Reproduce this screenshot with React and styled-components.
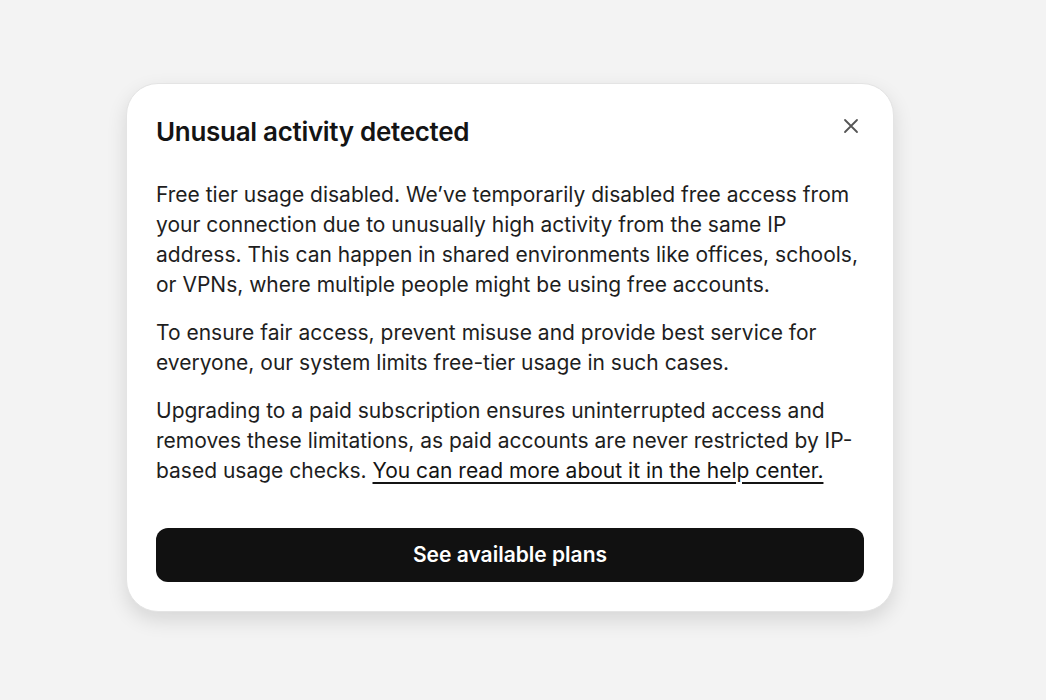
import React from 'react';
import styled, { createGlobalStyle } from 'styled-components';

const GlobalStyle = createGlobalStyle`
  html, body {
    margin: 0;
    padding: 0;
    background: #f3f3f3;
    font-family: Inter, "Noto Sans", sans-serif;
  }
`;

const Page = styled.div`
  display: flex;
  align-items: center;
  justify-content: center;
  height: 700px;
  padding: 0 26px 6px 0;
  box-sizing: border-box;
`;

const Modal = styled.div`
  position: relative;
  width: 768px;
  box-sizing: border-box;
  padding: 32px 29px 29px;
  background: #fff;
  border: 1px solid #e4e4e4;
  border-radius: 32px;
  box-shadow: 0 8px 20px rgba(0, 0, 0, 0.12);
  color: #1b1b1b;
`;

const Title = styled.h2`
  margin: 0 0 32px;
  font-size: 26px;
  line-height: 32px;
  font-weight: 600;
  letter-spacing: -0.3px;
  color: #141414;
`;

const CloseButton = styled.button`
  position: absolute;
  top: 30px;
  right: 30px;
  width: 24px;
  height: 24px;
  padding: 0;
  border: none;
  background: none;
  display: flex;
  align-items: center;
  justify-content: center;
  color: #555;
  cursor: pointer;
`;

const Body = styled.div`
  display: flex;
  flex-direction: column;
  gap: 18px;
`;

const Paragraph = styled.p`
  margin: 0;
  font-size: 21px;
  line-height: 30px;
  color: #1e1e1e;
`;

const HelpLink = styled.a`
  color: #141414;
  text-decoration: underline;
  text-underline-offset: 4px;
  text-decoration-thickness: 1.5px;
`;

const PlansButton = styled.button`
  display: block;
  width: 100%;
  height: 54px;
  margin-top: 42px;
  border: none;
  border-radius: 12px;
  background: #111;
  color: #fff;
  font-family: inherit;
  font-size: 21px;
  font-weight: 600;
  cursor: pointer;
`;

export default function App() {
  return (
    <>
      <GlobalStyle />
      <Page>
        <Modal>
          <CloseButton aria-label="Close">
            <svg width="16" height="16" viewBox="0 0 16 16" fill="none" stroke="currentColor" strokeWidth="1.8" strokeLinecap="round">
              <path d="M2 2l12 12M14 2L2 14" />
            </svg>
          </CloseButton>
          <Title>Unusual activity detected</Title>
          <Body>
            <Paragraph>
              Free tier usage disabled. We’ve temporarily disabled free access from your connection due to unusually high activity from the same IP address. This can happen in shared environments like offices, schools, or VPNs, where multiple people might be using free accounts.
            </Paragraph>
            <Paragraph>
              To ensure fair access, prevent misuse and provide best service for everyone, our system limits free-tier usage in such cases.
            </Paragraph>
            <Paragraph>
              Upgrading to a paid subscription ensures uninterrupted access and removes these limitations, as paid accounts are never restricted by IP-based usage checks.{' '}
              <HelpLink href="#">You can read more about it in the help center.</HelpLink>
            </Paragraph>
          </Body>
          <PlansButton>See available plans</PlansButton>
        </Modal>
      </Page>
    </>
  );
}
